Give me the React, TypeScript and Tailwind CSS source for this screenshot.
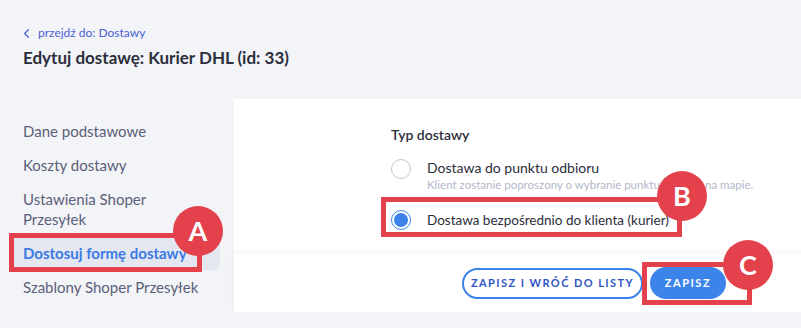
import { ChevronLeft } from 'lucide-react';

const MENU = [
  { label: 'Dane podstawowe' },
  { label: 'Koszty dostawy' },
  { label: 'Ustawienia Shoper Przesyłek' },
  { label: 'Dostosuj formę dostawy', active: true },
  { label: 'Szablony Shoper Przesyłek' },
];

function Marker({ letter, className }: { letter: string; className: string }) {
  return (
    <div
      className={`absolute w-[50px] h-[50px] rounded-full bg-[#e3414c] flex items-center justify-center text-white text-[27px] font-bold ${className}`}
    >
      {letter}
    </div>
  );
}

function Radio({ checked }: { checked?: boolean }) {
  if (checked) {
    return (
      <span className="w-[20px] h-[20px] rounded-full border-[1.5px] border-[#3b82ea] flex items-center justify-center flex-shrink-0">
        <span className="w-[14px] h-[14px] rounded-full bg-[#3b82ea]" />
      </span>
    );
  }
  return <span className="w-[20px] h-[20px] rounded-full border-[1.5px] border-[#c1c4d6] bg-white flex-shrink-0" />;
}

export default function App() {
  return (
    <div
      className="relative w-[801px] h-[328px] overflow-hidden bg-[#f3f4f8] text-[#2b2e3b]"
      style={{ fontFamily: 'Lato, "Noto Sans", sans-serif' }}
    >
      {/* header */}
      <div className="pl-[23px] pt-[24px] h-[99px]">
        <a className="flex items-center gap-[4px] text-[12px] leading-[18px] text-[#4a60d4] -ml-[4px]">
          <ChevronLeft size={15} strokeWidth={2} />
          <span>przejdź do: Dostawy</span>
        </a>
        <h1 className="mt-[4px] text-[17px] leading-[24px] font-bold text-[#2b2e3b]">
          Edytuj dostawę: Kurier DHL (id: 33)
        </h1>
      </div>

      <div className="flex">
        {/* sidebar */}
        <nav className="w-[234px] pl-[10px] pr-[14px] pt-[15px] flex flex-col">
          {MENU.map((m) => (
            <div
              key={m.label}
              className={`px-[13px] py-[7px] text-[15px] leading-[20px] rounded-[6px] ${
                m.active ? 'bg-[#e4e6f0] text-[#3b7be6] font-bold' : 'text-[#5b6079]'
              }`}
            >
              {m.label === 'Ustawienia Shoper Przesyłek' ? (
                <>
                  Ustawienia Shoper
                  <br />
                  Przesyłek
                </>
              ) : (
                m.label
              )}
            </div>
          ))}
        </nav>

        {/* main */}
        <div className="flex-1 flex flex-col">
          <div className="bg-white h-[155px] pl-[157px] pt-[26px]">
            <div className="text-[14px] leading-[20px] font-semibold text-[#2b2e3b]">Typ dostawy</div>
            <div className="mt-[14px] flex gap-[16px] items-start">
              <Radio />
              <div className="-mt-[1px]">
                <div className="text-[14px] leading-[20px] text-[#2b2e3b]">Dostawa do punktu odbioru</div>
                <div className="text-[11.5px] leading-[14px] text-[#b3b7cb]">
                  Klient zostanie poproszony o wybranie punktu odbioru na mapie.
                </div>
              </div>
            </div>
            <div className="mt-[18px] flex gap-[16px] items-center">
              <Radio checked />
              <div className="text-[13.5px] leading-[20px] text-[#2b2e3b]">Dostawa bezpośrednio do klienta (kurier)</div>
            </div>
          </div>
          <div className="bg-white h-[58px] shadow-[0_-3px_6px_rgba(40,45,80,0.05)] flex items-center justify-end gap-[7px] pr-[75px]">
            <button className="h-[31px] w-[181px] rounded-full border-2 border-[#3b82ea] text-[#2f55c4] text-[11px] font-bold tracking-[0.13em]">
              ZAPISZ I WRÓĆ DO LISTY
            </button>
            <button className="h-[32px] w-[76px] rounded-full bg-[#3d84ea] text-white text-[11px] font-bold tracking-[0.14em]">
              ZAPISZ
            </button>
          </div>
        </div>
      </div>

      {/* annotations */}
      <div className="absolute left-[9px] top-[233px] w-[193px] h-[39px] border-[5px] border-[#e3414c]" />
      <Marker letter="A" className="left-[173px] top-[206px]" />
      <div className="absolute left-[381px] top-[197px] w-[301px] h-[40px] border-[5px] border-[#e3414c]" />
      <Marker letter="B" className="left-[657px] top-[171px]" />
      <div className="absolute left-[642px] top-[262px] w-[110px] h-[43px] border-[5px] border-[#e3414c]" />
      <Marker letter="C" className="left-[723px] top-[240px]" />
    </div>
  );
}
